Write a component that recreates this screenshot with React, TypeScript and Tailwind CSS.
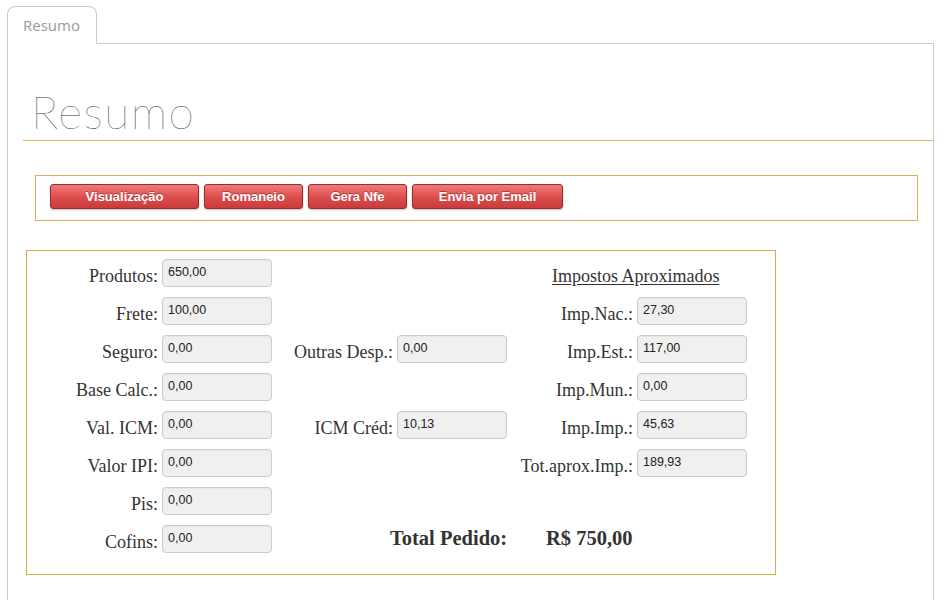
import React from "react";

type Field = { label: string; value: string };

const left: Field[] = [
  { label: "Produtos:", value: "650,00" },
  { label: "Frete:", value: "100,00" },
  { label: "Seguro:", value: "0,00" },
  { label: "Base Calc.:", value: "0,00" },
  { label: "Val. ICM:", value: "0,00" },
  { label: "Valor IPI:", value: "0,00" },
  { label: "Pis:", value: "0,00" },
  { label: "Cofins:", value: "0,00" },
];

const impostos: Field[] = [
  { label: "Imp.Nac.:", value: "27,30" },
  { label: "Imp.Est.:", value: "117,00" },
  { label: "Imp.Mun.:", value: "0,00" },
  { label: "Imp.Imp.:", value: "45,63" },
  { label: "Tot.aprox.Imp.:", value: "189,93" },
];

const buttons = [
  { text: "Visualização", w: "w-[149px]" },
  { text: "Romaneio", w: "w-[99px]" },
  { text: "Gera Nfe", w: "w-[99px]" },
  { text: "Envia por Email", w: "w-[151px]" },
];

function Label({ text, row, col }: { text: string; row: number; col: string }) {
  return (
    <div
      className={`${col} pr-[4px] pt-[7px] text-right text-[18px] leading-[20px] whitespace-nowrap text-[#333] font-['Liberation_Serif',serif]`}
      style={{ gridRowStart: row }}
    >
      {text}
    </div>
  );
}

function Box({ value, row, col }: { value: string; row: number; col: string }) {
  return (
    <div
      className={`${col} rounded-[4px] border border-[#cccccc] bg-[#f0f0f0] pl-[5px] pt-[5px] text-[12.5px] leading-[14px] text-[#222] font-['Liberation_Sans',Arial,sans-serif] shadow-[inset_0_1px_1px_rgba(0,0,0,0.04)]`}
      style={{ gridRowStart: row }}
    >
      {value}
    </div>
  );
}

export default function App() {
  return (
    <div className="min-h-[600px] bg-white pl-[7px] pr-[13px] pt-[6px]">
      <div className="relative z-10 -mb-px h-[38px] w-[90px] rounded-t-[8px] border border-b-0 border-[#cccccc] bg-white pl-[15px] pt-[9px] text-[15px] leading-[18px] text-[#999] font-['Open_Sans',sans-serif]">
        Resumo
      </div>
      <div className="min-h-[600px] border border-b-0 border-[#cccccc] pb-10">
        <div className="ml-[15px] mt-[44px] border-b border-[#e3b25c] pb-[4px] pl-[8px]">
          <h1 className="text-[46px] leading-[48px] font-thin tracking-[1.5px] text-[#333] font-['Lato','Inter',sans-serif]">
            Resumo
          </h1>
        </div>

        <div className="ml-[27px] mr-[15px] mt-[34px] flex gap-[5px] border border-[#dfae5a] pb-[11px] pl-[14px] pt-[8px]">
          {buttons.map((b) => (
            <button
              key={b.text}
              className={`${b.w} h-[25px] rounded-[3px] border border-[#9c2a2a] bg-gradient-to-b from-[#ee7a7a] via-[#dd4f4f] to-[#c93b3b] text-center text-[13px] font-bold text-white font-['Liberation_Sans',Arial,sans-serif] shadow-[0_1px_2px_rgba(0,0,0,0.25)] [text-shadow:0_-1px_0_rgba(0,0,0,0.3)]`}
            >
              {b.text}
            </button>
          ))}
        </div>

        <div className="ml-[18px] mt-[29px] w-[750px] border border-[#e0a64c] pb-[21px] pt-[8px]">
          <div className="grid grid-cols-[135px_110px_125px_110px_130px_110px] auto-rows-[28px] gap-y-[10px]">
            {left.map((f, i) => (
              <React.Fragment key={f.label}>
                <Label text={f.label} row={i + 1} col="col-start-1" />
                <Box value={f.value} row={i + 1} col="col-start-2" />
              </React.Fragment>
            ))}

            <Label text="Outras Desp.:" row={3} col="col-start-3" />
            <Box value="0,00" row={3} col="col-start-4" />
            <Label text="ICM Créd:" row={5} col="col-start-3" />
            <Box value="10,13" row={5} col="col-start-4" />

            <div
              className="col-start-5 col-span-2 pl-[45px] pt-[7px] text-[18px] leading-[20px] text-[#333] underline underline-offset-[2px] font-['Liberation_Serif',serif]"
              style={{ gridRowStart: 1 }}
            >
              Impostos Aproximados
            </div>
            {impostos.map((f, i) => (
              <React.Fragment key={f.label}>
                <Label text={f.label} row={i + 2} col="col-start-5" />
                <Box value={f.value} row={i + 2} col="col-start-6" />
              </React.Fragment>
            ))}

            <div
              className="col-start-3 col-span-4 flex pl-[118px] pt-[1px] text-[20.5px] font-bold leading-[24px] text-[#333] font-['Liberation_Serif',serif]"
              style={{ gridRowStart: 8 }}
            >
              <span className="w-[156px]">Total Pedido:</span>
              <span>R$ 750,00</span>
            </div>
          </div>
        </div>
      </div>
    </div>
  );
}
